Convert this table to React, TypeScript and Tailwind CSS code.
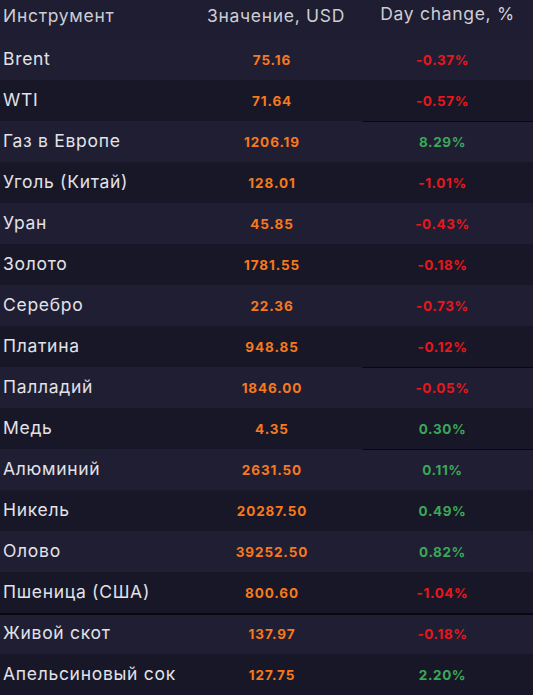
const rows: { name: string; value: string; change: string; line?: "part" | "full" }[] = [
  { name: "Brent", value: "75.16", change: "-0.37%" },
  { name: "WTI", value: "71.64", change: "-0.57%" },
  { name: "Газ в Европе", value: "1206.19", change: "8.29%", line: "part" },
  { name: "Уголь (Китай)", value: "128.01", change: "-1.01%" },
  { name: "Уран", value: "45.85", change: "-0.43%" },
  { name: "Золото", value: "1781.55", change: "-0.18%" },
  { name: "Серебро", value: "22.36", change: "-0.73%" },
  { name: "Платина", value: "948.85", change: "-0.12%" },
  { name: "Палладий", value: "1846.00", change: "-0.05%", line: "part" },
  { name: "Медь", value: "4.35", change: "0.30%" },
  { name: "Алюминий", value: "2631.50", change: "0.11%", line: "part" },
  { name: "Никель", value: "20287.50", change: "0.49%" },
  { name: "Олово", value: "39252.50", change: "0.82%" },
  { name: "Пшеница (США)", value: "800.60", change: "-1.04%" },
  { name: "Живой скот", value: "137.97", change: "-0.18%", line: "full" },
  { name: "Апельсиновый сок", value: "127.75", change: "2.20%" },
]

export default function App() {
  return (
    <div className="w-[533px] h-[695px] overflow-hidden bg-[#1e1d31] font-['Inter',sans-serif]">
      {/* Header */}
      <div className="grid grid-cols-[192px_160px_181px] h-[39px] items-center text-[17.5px] tracking-[0.7px] text-[#cdcdd4]">
        <div className="pl-[3px] pb-[6px]">Инструмент</div>
        <div className="text-center pl-[8px] pb-[6px] whitespace-nowrap">Значение, USD</div>
        <div className="text-center pl-[10px] pb-[10px] whitespace-nowrap">Day change, %</div>
      </div>

      {rows.map((r, i) => (
        <div
          key={r.name}
          className={
            "relative grid grid-cols-[192px_160px_181px] h-[41px] items-center " +
            (i % 2 === 0 ? "bg-[#1f1e33]" : "bg-[#181727]")
          }
        >
          {r.line === "part" && (
            <div className="absolute top-0 left-[362px] right-0 h-[1px] bg-[#07070d]" />
          )}
          {r.line === "full" && (
            <div className="absolute top-0 left-0 right-0 h-[2px] bg-[#07070d]" />
          )}
          <div className="pl-[3px] pb-[1px] text-[17.5px] tracking-[0.7px] text-[#e2e2e8] whitespace-nowrap">
            {r.name}
          </div>
          <div className="text-center pt-[1px] text-[13.5px] tracking-[0.9px] font-bold text-[#f7791d]">
            {r.value}
          </div>
          <div
            className={
              "text-center pt-[1px] text-[13.5px] tracking-[0.6px] font-bold " +
              (r.change.startsWith("-") ? "text-[#e8171c]" : "text-[#3aa858]")
            }
          >
            {r.change}
          </div>
        </div>
      ))}
    </div>
  )
}
